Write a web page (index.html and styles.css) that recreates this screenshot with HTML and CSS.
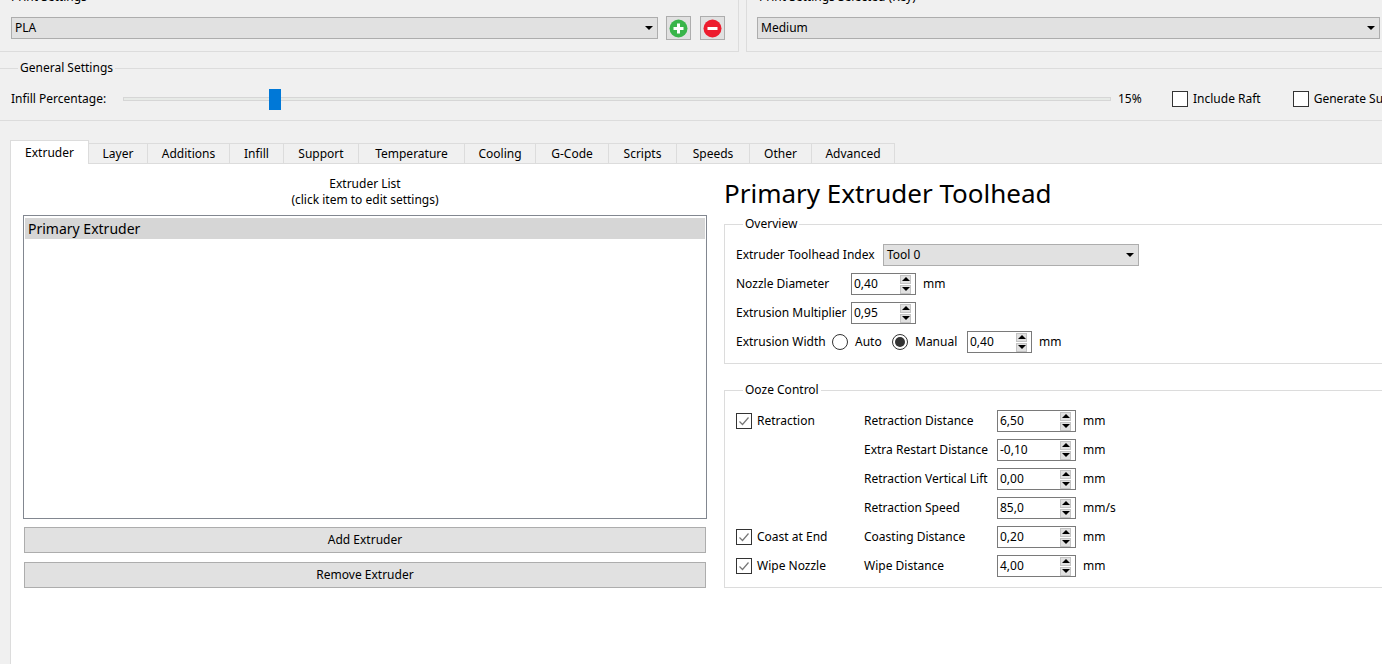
FILE: index.html
```html
<!DOCTYPE html>
<html lang="en">
<head>
  <meta charset="UTF-8">
  <title>Process Settings</title>
  <link rel="stylesheet" href="styles.css">
</head>
<body>

  <div class="top-row">
    <fieldset class="group group-material">
      <legend>Print Settings</legend>
      <div class="profile-row">
        <div class="combo combo-grow">PLA<span class="caret"></span></div>
        <button class="icon-btn">
          <svg width="19" height="19" viewBox="0 0 19 19"><circle cx="9.5" cy="9.5" r="9" fill="#39b54a"/><path d="M9.5 4.5v10M4.5 9.5h10" stroke="#fff" stroke-width="3"/></svg>
        </button>
        <button class="icon-btn">
          <svg width="19" height="19" viewBox="0 0 19 19"><circle cx="9.5" cy="9.5" r="9" fill="#ed1c2e"/><path d="M4.5 9.5h10" stroke="#fff" stroke-width="3"/></svg>
        </button>
      </div>
    </fieldset>
    <fieldset class="group group-quality">
      <legend>Print Settings Selected (Key)</legend>
      <div class="profile-row">
        <div class="combo combo-quality">Medium<span class="caret"></span></div>
        <button class="icon-btn">
          <svg width="19" height="19" viewBox="0 0 19 19"><circle cx="9.5" cy="9.5" r="9" fill="#39b54a"/><path d="M9.5 4.5v10M4.5 9.5h10" stroke="#fff" stroke-width="3"/></svg>
        </button>
      </div>
    </fieldset>
  </div>

  <fieldset class="group group-general">
    <legend>General Settings</legend>
    <div class="general-row">
      <span class="infill-label">Infill Percentage:</span>
      <div class="slider"><span class="slider-handle"></span></div>
      <span class="infill-value">15%</span>
      <label class="check raft"><span class="box"></span>Include Raft</label>
      <label class="check support"><span class="box"></span>Generate Support</label>
    </div>
  </fieldset>

  <div class="tabs">
    <div class="tab active">Extruder</div>
    <div class="tab">Layer</div>
    <div class="tab">Additions</div>
    <div class="tab">Infill</div>
    <div class="tab">Support</div>
    <div class="tab">Temperature</div>
    <div class="tab">Cooling</div>
    <div class="tab">G-Code</div>
    <div class="tab">Scripts</div>
    <div class="tab">Speeds</div>
    <div class="tab">Other</div>
    <div class="tab">Advanced</div>
  </div>

  <div class="pane">
    <div class="extruder-col">
      <div class="list-title">Extruder List<br>(click item to edit settings)</div>
      <div class="list">
        <div class="list-item">Primary Extruder</div>
      </div>
      <button class="wide-btn first">Add Extruder</button>
      <button class="wide-btn">Remove Extruder</button>
    </div>

    <div class="detail-col">
      <h1>Primary Extruder Toolhead</h1>

      <fieldset class="group group-panel">
        <legend>Overview</legend>
        <div class="form-row">
          <span class="label-index">Extruder Toolhead Index</span>
          <div class="combo combo-tool">Tool 0<span class="caret"></span></div>
        </div>
        <div class="form-row">
          <span class="label-short">Nozzle Diameter</span>
          <div class="spin">0,40<span class="arrows"><i class="up"></i><i class="down"></i></span></div>
          <span class="unit">mm</span>
        </div>
        <div class="form-row">
          <span class="label-short">Extrusion Multiplier</span>
          <div class="spin">0,95<span class="arrows"><i class="up"></i><i class="down"></i></span></div>
        </div>
        <div class="form-row">
          <span class="label-width">Extrusion Width</span>
          <span class="radio"></span><span class="radio-text auto">Auto</span>
          <span class="radio checked"></span><span class="radio-text manual">Manual</span>
          <div class="spin">0,40<span class="arrows"><i class="up"></i><i class="down"></i></span></div>
          <span class="unit">mm</span>
        </div>
      </fieldset>

      <fieldset class="group group-panel group-ooze">
        <legend>Ooze Control</legend>
        <div class="ooze-grid">
          <label class="check"><span class="box"><svg width="14" height="14" viewBox="0 0 14 14"><path d="M2.5 7.5l3 3 6-7" fill="none" stroke="#777" stroke-width="1.2"/></svg></span>Retraction</label>
          <span>Retraction Distance</span>
          <div class="spin spin-wide">6,50<span class="arrows"><i class="up"></i><i class="down"></i></span></div>
          <span>mm</span>

          <span></span>
          <span>Extra Restart Distance</span>
          <div class="spin spin-wide">-0,10<span class="arrows"><i class="up"></i><i class="down"></i></span></div>
          <span>mm</span>

          <span></span>
          <span>Retraction Vertical Lift</span>
          <div class="spin spin-wide">0,00<span class="arrows"><i class="up"></i><i class="down"></i></span></div>
          <span>mm</span>

          <span></span>
          <span>Retraction Speed</span>
          <div class="spin spin-wide">85,0<span class="arrows"><i class="up"></i><i class="down"></i></span></div>
          <span>mm/s</span>

          <label class="check"><span class="box"><svg width="14" height="14" viewBox="0 0 14 14"><path d="M2.5 7.5l3 3 6-7" fill="none" stroke="#777" stroke-width="1.2"/></svg></span>Coast at End</label>
          <span>Coasting Distance</span>
          <div class="spin spin-wide">0,20<span class="arrows"><i class="up"></i><i class="down"></i></span></div>
          <span>mm</span>

          <label class="check"><span class="box"><svg width="14" height="14" viewBox="0 0 14 14"><path d="M2.5 7.5l3 3 6-7" fill="none" stroke="#777" stroke-width="1.2"/></svg></span>Wipe Nozzle</label>
          <span>Wipe Distance</span>
          <div class="spin spin-wide">4,00<span class="arrows"><i class="up"></i><i class="down"></i></span></div>
          <span>mm</span>
        </div>
      </fieldset>
    </div>
  </div>

</body>
</html>
```

FILE: styles.css
```css
html, body {
  height: 100%;
}

body {
  margin: 0;
  height: 100vh;
  overflow: hidden;
  display: flex;
  flex-direction: column;
  background: #f0f0f0;
  color: #000;
  font-family: "Noto Sans", sans-serif;
  font-size: 12px;
  line-height: 16px;
}

button {
  font: inherit;
  color: inherit;
  padding: 0;
}

/* group boxes */
.group {
  margin: 0;
  padding: 0;
  min-width: 0;
  border: 1px solid #dcdcdc;
}

.group legend {
  padding: 0 2px;
  line-height: 16px;
}

.top-row {
  display: flex;
  gap: 7px;
  margin-top: -11px;
  flex: none;
}

.group-material {
  width: 714px;
  flex: none;
  border-left: none;
  padding: 11px 13px 11px 11px;
}

.group-material legend {
  margin-left: -2px;
}

.group-quality {
  width: 700px;
  flex: none;
  border-right: none;
  padding: 11px 0 11px 10px;
}

.profile-row {
  display: flex;
  align-items: center;
  height: 24px;
}

.combo {
  position: relative;
  box-sizing: border-box;
  height: 22px;
  line-height: 20px;
  padding-left: 3px;
  background: #e1e1e1;
  border: 1px solid #adadad;
}

.combo-grow {
  flex: 1;
}

.combo-quality {
  width: 623px;
  flex: none;
}

.combo-tool {
  width: 256px;
  flex: none;
}

.caret {
  position: absolute;
  right: 4px;
  top: 8px;
  border-top: 4px solid #000;
  border-left: 4px solid transparent;
  border-right: 4px solid transparent;
}

.icon-btn {
  box-sizing: border-box;
  width: 25px;
  height: 24px;
  margin-left: 8px;
  display: flex;
  align-items: center;
  justify-content: center;
  background: #e1e1e1;
  border: 1px solid #adadad;
}

.icon-btn + .icon-btn {
  margin-left: 9px;
}

/* general settings */
.group-general {
  flex: none;
  margin-top: 8px;
  padding: 12px 0 11px 11px;
  border-left: none;
  border-right: none;
}

.group-general legend {
  margin-left: 7px;
}

.general-row {
  display: flex;
  align-items: center;
  height: 21px;
  white-space: nowrap;
}

.infill-label {
  width: 112px;
  flex: none;
}

.slider {
  position: relative;
  box-sizing: border-box;
  width: 988px;
  height: 4px;
  flex: none;
  background: #e7eae7;
  border: 1px solid #d6d6d6;
}

.slider-handle {
  position: absolute;
  left: 145px;
  top: -9px;
  width: 12px;
  height: 21px;
  background: #0078d7;
}

.infill-value {
  width: 54px;
  flex: none;
  padding-left: 7px;
}

.check {
  display: flex;
  align-items: center;
  gap: 5px;
  white-space: nowrap;
}

.support {
  margin-left: 32px;
}

.box {
  box-sizing: border-box;
  width: 16px;
  height: 16px;
  flex: none;
  display: flex;
  background: #fff;
  border: 1px solid #333;
}

.raft {
  width: 89px;
}

/* tabs */
.tabs {
  flex: none;
  display: grid;
  grid-template-columns: 79px 59px 82px 54px 75px 106px 71px 73px 68px 73px 62px 83px;
  justify-content: start;
  height: 24px;
  margin: 19px 0 0 10px;
  position: relative;
  z-index: 1;
}

.tab {
  box-sizing: border-box;
  height: 21px;
  margin-top: 3px;
  line-height: 19px;
  text-align: center;
  border: 1px solid #dcdcdc;
  border-left: none;
  border-bottom: none;
}

.tab.active {
  height: 24px;
  margin-top: 0;
  line-height: 23px;
  background: #fff;
  border-left: 1px solid #dcdcdc;
}

/* content pane */
.pane {
  flex: 1;
  min-height: 0;
  display: flex;
  gap: 17px;
  margin: -1px 0 0 10px;
  padding-left: 12px;
  background: #fff;
  border-top: 1px solid #dcdcdc;
  border-left: 1px solid #dcdcdc;
}

.extruder-col {
  width: 684px;
  flex: none;
  padding-top: 12px;
}

.list-title {
  text-align: center;
}

.list {
  box-sizing: border-box;
  height: 304px;
  margin-top: 7px;
  padding: 2px 1px;
  background: #fff;
  border: 1px solid #828790;
}

.list-item {
  height: 21px;
  padding-left: 3px;
  font-size: 14px;
  line-height: 21px;
  background: #d6d6d6;
}

.wide-btn {
  display: block;
  box-sizing: border-box;
  width: 682px;
  height: 26px;
  margin: 9px 1px 0;
  background: #e1e1e1;
  border: 1px solid #adadad;
}

.wide-btn.first {
  margin-top: 8px;
}

.detail-col {
  width: 700px;
  flex: none;
}

h1 {
  margin: 0 0 8px;
  padding-top: 14px;
  font-size: 26px;
  font-weight: 400;
  line-height: 30px;
}

.group-panel {
  padding: 12px 0 10px 11px;
  border-right: none;
}

.group-panel legend {
  margin-left: 7px;
}

.group-ooze {
  margin-top: 18px;
}

.form-row {
  display: flex;
  align-items: center;
  height: 22px;
  margin-bottom: 7px;
}

.form-row:last-child {
  margin-bottom: 0;
}

.label-index {
  width: 147px;
  flex: none;
}

.label-short {
  width: 115px;
  flex: none;
}

.label-width {
  width: 96px;
  flex: none;
}

.unit {
  margin-left: 7px;
}

.radio {
  box-sizing: border-box;
  width: 16px;
  height: 16px;
  flex: none;
  display: flex;
  align-items: center;
  justify-content: center;
  background: #fff;
  border: 1px solid #333;
  border-radius: 50%;
}

.radio.checked::before {
  content: "";
  width: 10px;
  height: 10px;
  background: #333;
  border-radius: 50%;
}

.radio-text {
  margin-left: 7px;
}

.radio-text.auto {
  width: 37px;
}

.radio-text.manual {
  width: 52px;
}

.spin {
  box-sizing: border-box;
  display: flex;
  align-items: center;
  justify-content: space-between;
  width: 65px;
  height: 22px;
  flex: none;
  padding: 0 4px 0 2px;
  background: #fff;
  border: 1px solid #7a7a7a;
}

.spin-wide {
  width: 79px;
}

.arrows {
  display: flex;
  flex-direction: column;
  gap: 1px;
}

.arrows i {
  box-sizing: border-box;
  display: flex;
  align-items: center;
  justify-content: center;
  width: 11px;
  height: 9px;
  background: #e1e1e1;
  border: 1px solid #c4c4c4;
}

.arrows i::before {
  content: "";
  border-left: 4px solid transparent;
  border-right: 4px solid transparent;
}

.arrows .up::before {
  border-bottom: 4px solid #000;
}

.arrows .down::before {
  border-top: 4px solid #000;
}

.ooze-grid {
  display: grid;
  grid-template-columns: 128px 133px 79px auto;
  grid-auto-rows: 22px;
  row-gap: 7px;
  align-items: center;
  justify-content: start;
}

.ooze-grid > span:last-child,
.ooze-grid > .spin + span {
  margin-left: 7px;
}
```
